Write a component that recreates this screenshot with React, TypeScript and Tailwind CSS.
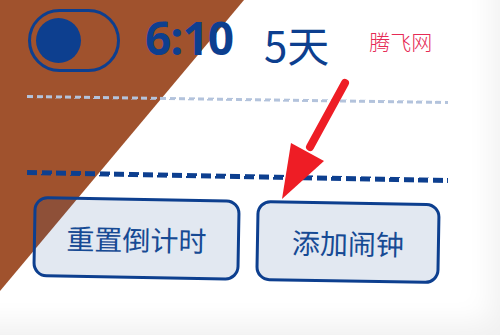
import React from "react";

const App: React.FC = () => {
  return (
    <div className="relative w-[500px] h-[335px] overflow-hidden bg-white shadow-[inset_-22px_-26px_28px_-14px_rgba(0,0,0,0.06)] font-['Noto_Sans','Noto_Sans_CJK_SC',sans-serif]">
      {/* brown corner wedge */}
      <div className="absolute inset-0 bg-[#a0522d] [clip-path:polygon(0_0,244px_0,0_291px)]" />

      <div className="relative flex flex-col">
        {/* top row */}
        <div className="flex items-start pt-[9px] pl-[28px]">
          <div className="shrink-0 w-[92px] h-[63px] rounded-full border-[3.5px] border-[#0d3f8f] flex items-center pl-[5px]">
            <div className="shrink-0 w-[45px] h-[45px] rounded-full bg-[#0d3f8f]" />
          </div>
          <div className="ml-[25px] mt-[5px] text-[46px] leading-none font-bold tracking-[-1px] text-[#0d3f8f] font-['Open_Sans',sans-serif]">
            6:10
          </div>
          <div className="ml-[31px] mt-[14px] text-[42px] leading-none text-[#0d3f8f] font-['Noto_Sans_CJK_SC',sans-serif]">
            5天
          </div>
          <div className="ml-[40px] mt-[22px] text-[21px] leading-none font-light text-[#e62a55] font-['Noto_Sans_CJK_SC',sans-serif]">
            腾飞网
          </div>
        </div>

        {/* light dashed line */}
        <div className="ml-[27px] mt-[26px] w-[421px] h-[3px] rotate-[0.8deg] bg-[repeating-linear-gradient(90deg,#b3c3dc_0_6px,transparent_6px_9.5px)]" />

        {/* dark dashed line */}
        <div className="ml-[27px] mt-[73px] w-[421px] h-[4.5px] rotate-[1.1deg] bg-[repeating-linear-gradient(90deg,#0d3f8f_0_10px,transparent_10px_14.5px)]" />

        {/* buttons */}
        <div className="flex gap-[16px] pl-[33px] mt-[20px] rotate-[1deg] origin-[204px_40px]">
          <button className="w-[207px] h-[81px] rounded-[14px] border-[3px] border-[#0d3f8f] bg-[#0d3f8f]/12 text-[28px] text-[#164a94] font-['Noto_Sans_CJK_SC',sans-serif] flex items-center justify-center">
            重置倒计时
          </button>
          <button className="w-[184px] h-[81px] rounded-[14px] border-[3px] border-[#0d3f8f] bg-[#0d3f8f]/12 text-[28px] text-[#164a94] font-['Noto_Sans_CJK_SC',sans-serif] flex items-center justify-center">
            添加闹钟
          </button>
        </div>
      </div>

      {/* red arrow */}
      <svg className="absolute inset-0" width="500" height="335" viewBox="0 0 500 335">
        <line x1="345" y1="83" x2="310" y2="147" stroke="#ee1d25" strokeWidth="8" strokeLinecap="round" />
        <polygon points="291,143 324,161 282,199" fill="#ee1d25" />
      </svg>
    </div>
  );
};

export default App;
